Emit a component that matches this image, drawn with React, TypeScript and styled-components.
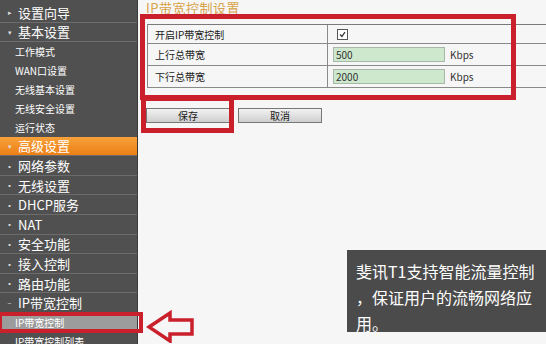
import React from 'react'
import styled, { createGlobalStyle } from 'styled-components'

const Global = createGlobalStyle`
  html, body { margin: 0; padding: 0; background: #f6f6f6; }
  body { width: 546px; height: 344px; overflow: hidden; font-family: "Liberation Sans", "Noto Sans CJK SC", sans-serif; }
`

const Page = styled.div`
  position: relative;
  display: flex;
  width: 546px;
  height: 344px;
  overflow: hidden;
`

const Sidebar = styled.div`
  width: 137px;
  flex-shrink: 0;
  background: #505050;
  border-right: 1px solid #3a3a3a;
  padding-top: 3px;
  display: flex;
  flex-direction: column;
`

const Item = styled.div<{ $sub?: boolean, $active?: boolean, $selected?: boolean }>`
  height: ${p => (p.$sub ? '18.9px' : '19.6px')};
  flex-shrink: 0;
  box-sizing: border-box;
  display: flex;
  align-items: center;
  gap: 5px;
  padding-left: ${p => (p.$sub ? '15px' : '6px')};
  color: #fff;
  font-size: ${p => (p.$sub ? '10px' : '13px')};
  font-family: "Noto Sans CJK SC", "Liberation Sans", sans-serif;
  border-bottom: ${p => (p.$sub ? 'none' : '1px solid #6c6c6c')};
  background: ${p => (p.$active ? 'linear-gradient(#f7a13a, #ec8016)' : p.$selected ? '#9c9c9c' : 'transparent')};
  white-space: nowrap;
`

const Mark = styled.span`
  width: 7px;
  font-size: 7px;
  color: #ddd;
  text-align: center;
`

const Main = styled.div`
  flex: 1;
  padding-left: 8px;
  display: flex;
  flex-direction: column;
`

const Title = styled.div`
  height: 16px;
  padding-top: 0;
  margin-bottom: 8px;
  color: #d8a34a;
  font-size: 13px;
  font-family: "Noto Sans CJK SC", sans-serif;
  line-height: 16px;
  letter-spacing: 0.5px;
`

const Table = styled.div`
  display: grid;
  grid-template-columns: 180px 1fr;
  border-left: 1px solid #8a8a8a;
  border-top: 1px solid #7a7a7a;
  margin-left: 1px;
`

const Cell = styled.div<{ $h: number, $first?: boolean }>`
  height: ${p => p.$h}px;
  box-sizing: border-box;
  border-bottom: 1px solid #8a8a8a;
  border-right: ${p => (p.$first ? '1px solid #8a8a8a' : 'none')};
  display: flex;
  align-items: center;
  gap: 4px;
  padding-left: ${p => (p.$first ? '7px' : '5px')};
  font-size: 10px;
  color: #222;
  font-family: "Noto Sans CJK SC", sans-serif;
`

const Check = styled.span`
  width: 9px;
  height: 9px;
  border: 1px solid #555;
  background: #fff;
  display: flex;
  align-items: center;
  justify-content: center;
  margin-left: 4px;
`

const Input = styled.div`
  width: 112px;
  height: 15px;
  box-sizing: border-box;
  background: #cde8cd;
  border: 1px solid #a8b8a8;
  font-size: 10px;
  color: #333;
  padding-left: 2px;
  line-height: 13px;
`

const Unit = styled.span`
  font-size: 10px;
  color: #333;
  margin-left: 1px;
`

const Buttons = styled.div`
  display: flex;
  gap: 8px;
  margin-top: 20px;
`

const Button = styled.div`
  width: 84px;
  height: 15px;
  box-sizing: border-box;
  border: 1px solid #777;
  background: linear-gradient(#f2f2f2, #cfcfcf);
  font-size: 10px;
  font-family: "Noto Sans CJK SC", sans-serif;
  display: flex;
  align-items: center;
  justify-content: center;
  color: #222;
`

const RedBox = styled.div<{ $x: number, $y: number, $w: number, $h: number, $b: number }>`
  position: absolute;
  left: ${p => p.$x}px;
  top: ${p => p.$y}px;
  width: ${p => p.$w}px;
  height: ${p => p.$h}px;
  box-sizing: border-box;
  border: ${p => p.$b}px solid #c9202b;
  pointer-events: none;
`

const Arrow = styled.svg`
  position: absolute;
  left: 146px;
  top: 309px;
`

const Caption = styled.div`
  position: absolute;
  left: 347px;
  top: 250px;
  width: 199px;
  height: 82px;
  box-sizing: border-box;
  background: #4b4b4b;
  color: #fff;
  font-size: 16px;
  line-height: 26px;
  padding: 8px 0 0 9px;
  white-space: nowrap;
  font-family: "Noto Sans CJK SC", sans-serif;
`

const menu: { t: string, sub?: boolean, mark?: string, active?: boolean, selected?: boolean }[] = [
  { t: '设置向导', mark: '▸' },
  { t: '基本设置', mark: '▾' },
  { t: '工作模式', sub: true },
  { t: 'WAN口设置', sub: true },
  { t: '无线基本设置', sub: true },
  { t: '无线安全设置', sub: true },
  { t: '运行状态', sub: true },
  { t: '高级设置', mark: '▾', active: true },
  { t: '网络参数', mark: '▪' },
  { t: '无线设置', mark: '▪' },
  { t: 'DHCP服务', mark: '▪' },
  { t: 'NAT', mark: '▪' },
  { t: '安全功能', mark: '▪' },
  { t: '接入控制', mark: '▪' },
  { t: '路由功能', mark: '▪' },
  { t: 'IP带宽控制', mark: '−' },
  { t: 'IP带宽控制', sub: true, selected: true },
  { t: 'IP带宽控制列表', sub: true },
]

export default function App() {
  return (
    <Page>
      <Global />
      <Sidebar>
        {menu.map((m, i) => (
          <Item key={i} $sub={m.sub} $active={m.active} $selected={m.selected}>
            {!m.sub && <Mark>{m.mark}</Mark>}
            {m.t}
          </Item>
        ))}
      </Sidebar>
      <Main>
        <Title>IP带宽控制设置</Title>
        <Table>
          <Cell $h={19} $first>开启IP带宽控制</Cell>
          <Cell $h={19}>
            <Check>
              <svg width="7" height="7" viewBox="0 0 7 7"><path d="M1 3.5 L3 5.5 L6 1" stroke="#333" strokeWidth="1.3" fill="none" /></svg>
            </Check>
          </Cell>
          <Cell $h={22} $first>上行总带宽</Cell>
          <Cell $h={22}><Input>500</Input><Unit>Kbps</Unit></Cell>
          <Cell $h={22} $first>下行总带宽</Cell>
          <Cell $h={22}><Input>2000</Input><Unit>Kbps</Unit></Cell>
        </Table>
        <Buttons>
          <Button>保存</Button>
          <Button>取消</Button>
        </Buttons>
      </Main>

      <RedBox $x={140} $y={14} $w={376} $h={86} $b={5} />
      <RedBox $x={141} $y={96} $w={93} $h={37} $b={5} />
      <RedBox $x={-2} $y={312} $w={145} $h={21} $b={4} />
      <Arrow width="50" height="34" viewBox="0 0 50 34">
        <path d="M3 18 L24 4 L24 11 L46 11 L46 25 L24 25 L24 32 Z" fill="none" stroke="#c9202b" strokeWidth="3.5" strokeLinejoin="miter" />
      </Arrow>
      <Caption>
        斐讯T1支持智能流量控制<br />，保证用户的流畅网络应<br />用。
      </Caption>
    </Page>
  )
}
